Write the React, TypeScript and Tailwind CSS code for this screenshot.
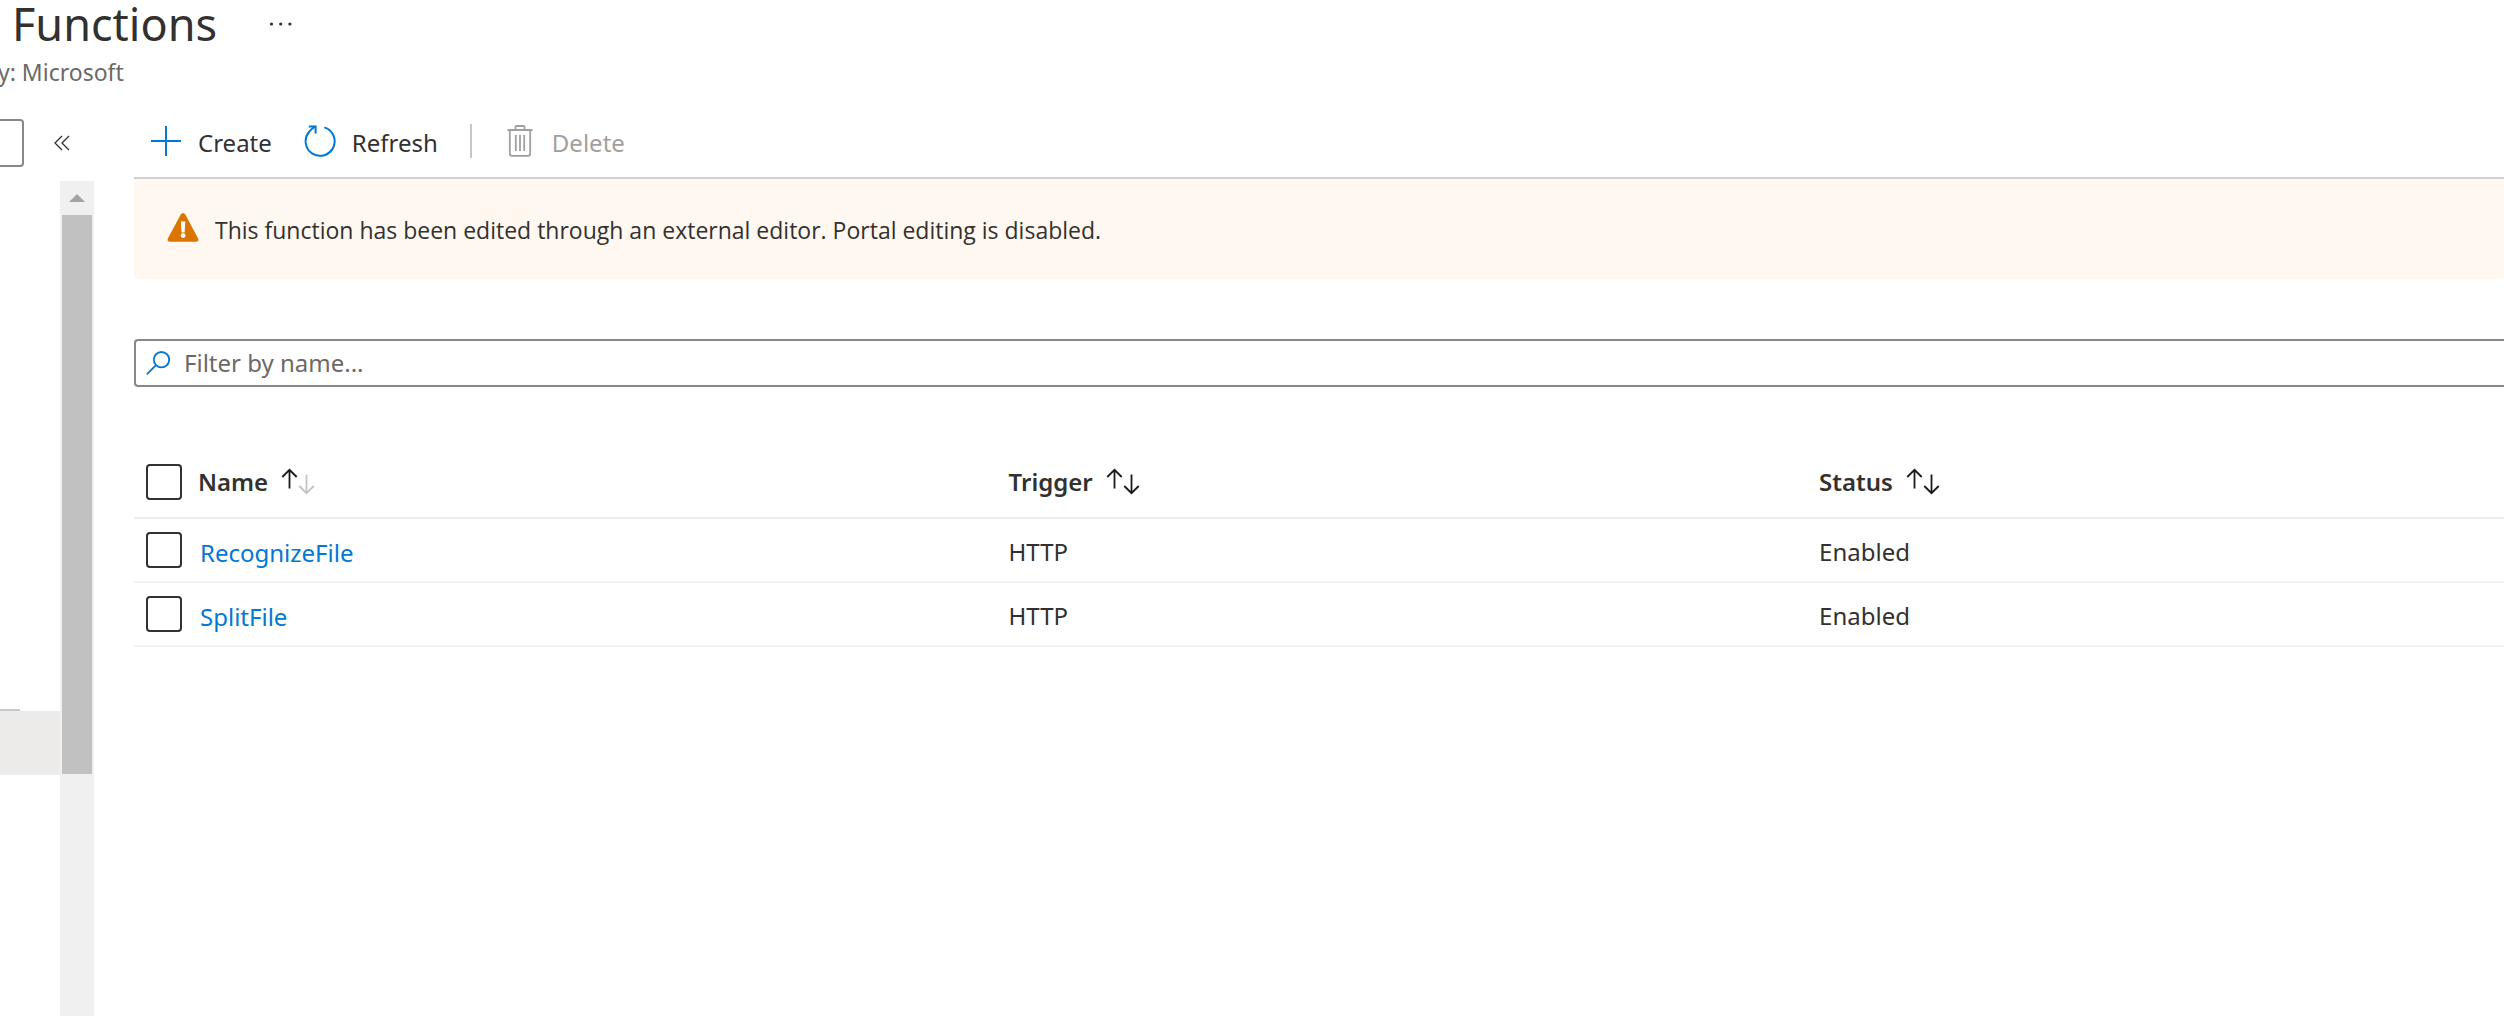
import { useState } from "react";

const rows = [
  { name: "RecognizeFile", trigger: "HTTP", status: "Enabled" },
  { name: "SplitFile", trigger: "HTTP", status: "Enabled" },
];

function SortIcon({ ascending = false }: { ascending?: boolean }) {
  return (
    <svg className="h-[26px] w-8 shrink-0 overflow-visible" viewBox="0 0 32 26" fill="none" strokeWidth="1.8" aria-hidden="true">
      <path d="M7.5 .8V19.5M.3 8 7.5.8 14.7 8" stroke="#1b1a19" />
      <path d="M24.5 5.5V24.2M17.3 17l7.2 7.2 7.2-7.2" stroke={ascending ? "#c4c4c4" : "#1b1a19"} />
    </svg>
  );
}

function PlusIcon() {
  return (
    <svg className="mb-1 size-8" viewBox="0 0 32 32" fill="none" stroke="#0078d4" strokeWidth="2" aria-hidden="true">
      <path d="M16 1v30M1 16h30" />
    </svg>
  );
}

function RefreshIcon() {
  return (
    <svg className="mb-1 size-8" viewBox="0 0 32 32" fill="none" stroke="#0078d4" strokeWidth="2" aria-hidden="true">
      <path d="M20.3 2.4A14.5 14.5 0 1 1 5 7Q7.5 3.7 11.4 1.4" />
      <path d="M4.8 1.4h6.8v7" />
    </svg>
  );
}

function TrashIcon() {
  return (
    <svg className="mb-1 size-8" viewBox="0 0 32 32" fill="none" stroke="#a19f9d" strokeWidth="1.8" aria-hidden="true">
      <path d="M3.5 5h25M11.5 5V2.2q0-1.2 1.2-1.2h6.6q1.2 0 1.2 1.2V5" />
      <path d="M5.8 5v23.5q0 2.3 2.3 2.3h15.8q2.3 0 2.3-2.3V5" />
      <path d="M11.8 10v16M16 10v16M20.2 10v16" />
    </svg>
  );
}

function WarningIcon() {
  return (
    <svg className="size-8 shrink-0" viewBox="0 0 32 32" aria-hidden="true">
      <path d="M13.7 1.6q2.3-3.2 4.6 0L31 25.2q1.6 3.4-2 3.6H3q-3.6-.2-2-3.6Z" fill="#db7500" />
      <path d="M13.9 8.4h4.4l-.7 11h-3Z" fill="#fff" />
      <circle cx="16.1" cy="22.6" r="2.4" fill="#fff" />
    </svg>
  );
}

function SearchIcon() {
  return (
    <svg className="size-6 shrink-0" viewBox="0 0 24 24" fill="none" stroke="#0078d4" strokeWidth="1.8" aria-hidden="true">
      <circle cx="15.5" cy="8.7" r="7.7" />
      <path d="M10 14.2.8 23.4" />
    </svg>
  );
}

const checkbox =
  "block size-9 appearance-none rounded-[4px] border-2 border-[#323130] bg-white checked:bg-[#0078d4]";

export default function App() {
  const [filter, setFilter] = useState("");
  const visible = rows.filter((r) => r.name.toLowerCase().includes(filter.toLowerCase()));

  return (
    <div className="flex min-h-screen flex-col overflow-hidden bg-white font-['Noto_Sans',sans-serif] text-2xl text-[#323130]">
      <header className="h-[119px]">
        <div className="flex h-12 items-center gap-[52px] pl-3">
          <h1 className="text-[45px] leading-[48px]">Functions</h1>
          <button type="button" aria-label="More options" className="flex h-12 items-center">
            <svg className="h-1 w-6" viewBox="0 0 24 4" fill="#323130" aria-hidden="true">
              <circle cx="2.5" cy="2" r="1.6" />
              <circle cx="11.7" cy="2" r="1.6" />
              <circle cx="20.9" cy="2" r="1.6" />
            </svg>
          </button>
        </div>
        <p className="-ml-0.5 pt-2 text-[23px] leading-8 text-[#6b6967]">y: Microsoft</p>
      </header>

      <div className="flex flex-1">
        <aside className="flex w-[94px] shrink-0 flex-col" aria-label="Resource menu">
          <div className="flex h-[62px] items-start">
            <input
              type="text"
              aria-label="Search menu"
              className="h-12 w-6 rounded-r-[4px] border-2 border-l-0 border-[#8a8886]"
            />
            <button type="button" aria-label="Collapse menu" className="ml-[30px] flex h-12 items-center">
              <svg className="size-4" viewBox="0 0 16 16" fill="none" stroke="#323130" strokeWidth="1.3" aria-hidden="true">
                <path d="M8 1 1 8l7 7M15 1 8 8l7 7" />
              </svg>
            </button>
          </div>
          <div className="flex flex-1">
            <nav className="flex w-[60px] flex-col pt-[528px]">
              <div className="h-0.5 w-5 bg-[#c8c8c8]" />
              <a href="#functions" aria-label="Functions" className="block h-16 bg-[#edebe9]" />
            </nav>
            <div className="flex w-[34px] flex-col items-center bg-[#f0f0f0]">
              <div className="flex h-[34px] w-full items-center justify-center">
                <svg className="h-2 w-4" viewBox="0 0 16 8" fill="#a3a3a3" aria-hidden="true">
                  <path d="M8 0 16 8H0Z" />
                </svg>
              </div>
              <div className="h-[559px] w-[30px] bg-[#c1c1c1]" />
            </div>
          </div>
        </aside>

        <main className="ml-10 min-w-0 flex-1">
          <div className="flex h-[60px] items-start gap-8 border-b-2 border-[#d2d0ce] pl-4">
            <button type="button" className="flex h-12 items-center gap-4">
              <PlusIcon />
              Create
            </button>
            <button type="button" className="flex h-12 items-center gap-4">
              <RefreshIcon />
              Refresh
            </button>
            <div className="mt-[5px] h-[34px] w-0.5 bg-[#c8c6c4]" />
            <button type="button" disabled className="flex h-12 items-center gap-4 text-[#a19f9d]">
              <TrashIcon />
              Delete
            </button>
          </div>

          <div role="status" className="flex h-[100px] items-center gap-4 rounded-b-[4px] bg-[#fff8f1] pl-[33px]">
            <WarningIcon />
            <span className="pt-0.5 font-['Open_Sans',sans-serif] text-[23px]">
              This function has been edited through an external editor. Portal editing is disabled.
            </span>
          </div>

          <label className="mt-[60px] flex h-12 items-center gap-[14px] rounded-l-[4px] border-2 border-r-0 border-[#8a8886] pl-2.5">
            <SearchIcon />
            <input
              type="text"
              value={filter}
              onChange={(e) => setFilter(e.target.value)}
              placeholder="Filter by name..."
              aria-label="Filter by name"
              className="h-10 flex-1 pb-0.5 outline-none placeholder:text-[#6b6967]"
            />
          </label>

          <table className="mt-[59px] w-full table-fixed border-collapse text-left">
            <thead>
              <tr className="h-[72px] border-b-2 border-[#edebe9]">
                <th className="w-16 pl-3">
                  <input type="checkbox" aria-label="Select all" className={checkbox} />
                </th>
                {["Name", "Trigger", "Status"].map((title, i) => (
                  <th key={title} className={i < 2 ? "w-[34.2%] font-semibold" : "font-semibold"}>
                    <button type="button" className="flex items-center gap-[14px]">
                      {title}
                      <SortIcon ascending={i === 0} />
                    </button>
                  </th>
                ))}
              </tr>
            </thead>
            <tbody>
              {visible.map((row) => (
                <tr key={row.name} className="h-16 border-b-2 border-[#f3f2f1]">
                  <td className="pl-3">
                    <input type="checkbox" aria-label={`Select ${row.name}`} className={checkbox} />
                  </td>
                  <td className="pt-1.5 pl-0.5">
                    <a href={`#${row.name}`} className="text-[#0078d4]">
                      {row.name}
                    </a>
                  </td>
                  <td className="pt-1">{row.trigger}</td>
                  <td className="pt-1">{row.status}</td>
                </tr>
              ))}
            </tbody>
          </table>
        </main>
      </div>
    </div>
  );
}
